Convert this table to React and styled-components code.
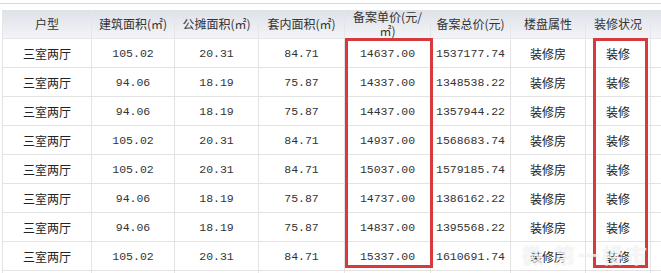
import React from 'react';
import styled, { createGlobalStyle } from 'styled-components';

const GlobalStyle = createGlobalStyle`
  html, body {
    margin: 0;
    padding: 0;
    background: #ffffff;
  }
  body {
    width: 661px;
    height: 273px;
    overflow: hidden;
  }
`

const Page = styled.div`
  position: relative;
  width: 661px;
  height: 273px;
  overflow: hidden;
  background: #ffffff;
  padding-top: 3px;
  box-sizing: border-box;
`

const TopRule = styled.div`
  height: 6px;
  border-top: 1px solid #dadada;
`

const Table = styled.table`
  border-collapse: collapse;
  table-layout: fixed;
  width: 680px;
  margin-left: 2px;
  font-family: "Noto Sans CJK SC", "Liberation Sans", sans-serif;
  font-size: 12px;
  color: #2a2a2a;
`

const HeadCell = styled.th`
  height: 27px;
  padding: 0 2px;
  font-weight: normal;
  line-height: 14px;
  text-align: center;
  color: #333;
  background: linear-gradient(#dde1e8, #f3f4f6);
  border: 1px solid #e4e6ea;
  border-top: none;
  white-space: ${(p) => (p.$wrap ? 'normal' : 'nowrap')};
`

const Cell = styled.td`
  height: 28px;
  padding: 0;
  text-align: center;
  border: 1px solid #e3e3e3;
  font-family: ${(p) =>
    p.$num ? '"Liberation Mono", "DejaVu Sans Mono", monospace' : '"Noto Sans CJK SC", sans-serif'};
  font-size: ${(p) => (p.$num ? '11.5px' : '12px')};
  color: ${(p) => (p.$num ? '#333' : '#222')};
  white-space: nowrap;
`

const Mark = styled.div`
  position: absolute;
  top: 38px;
  height: 230px;
  box-sizing: border-box;
  border: 3px solid #d63a3c;
  left: ${(p) => p.$left}px;
  width: ${(p) => p.$width}px;
`

const Watermark = styled.div`
  position: absolute;
  left: 522px;
  top: 242px;
  display: flex;
  align-items: center;
  gap: 8px;
  font-family: "Noto Sans CJK SC", sans-serif;
  font-size: 21px;
  line-height: 24px;
  font-weight: bold;
  letter-spacing: 3px;
  color: rgba(255, 255, 255, 0.72);
  text-shadow: 0 0 1px rgba(160, 160, 160, 0.35);
  pointer-events: none;
`

const columns = [89, 83, 84, 86, 86, 80, 75, 65, 40];

const headers = [
  '户型',
  '建筑面积(㎡)',
  '公摊面积(㎡)',
  '套内面积(㎡)',
  '备案单价(元/㎡)',
  '备案总价(元)',
  '楼盘属性',
  '装修状况',
  '',
];

const rows = [
  ['105.02', '20.31', '84.71', '14637.00', '1537177.74'],
  ['94.06', '18.19', '75.87', '14337.00', '1348538.22'],
  ['94.06', '18.19', '75.87', '14437.00', '1357944.22'],
  ['105.02', '20.31', '84.71', '14937.00', '1568683.74'],
  ['105.02', '20.31', '84.71', '15037.00', '1579185.74'],
  ['94.06', '18.19', '75.87', '14737.00', '1386162.22'],
  ['94.06', '18.19', '75.87', '14837.00', '1395568.22'],
  ['105.02', '20.31', '84.71', '15337.00', '1610691.74'],
];

const App = () => {
  return (
    <Page>
      <GlobalStyle />
      <TopRule />
      <Table>
        <colgroup>
          {columns.map((w, i) => (
            <col key={i} style={{ width: w }} />
          ))}
        </colgroup>
        <thead>
          <tr>
            {headers.map((h, i) => (
              <HeadCell key={i} $wrap={i === 4}>{h}</HeadCell>
            ))}
          </tr>
        </thead>
        <tbody>
          {rows.map((r, i) => (
            <tr key={i}>
              <Cell>三室两厅</Cell>
              {r.map((v, j) => (
                <Cell $num key={j}>{v}</Cell>
              ))}
              <Cell>装修房</Cell>
              <Cell>装修</Cell>
              <Cell />
            </tr>
          ))}
          <tr>
            {columns.map((w, i) => (
              <Cell key={i} />
            ))}
          </tr>
        </tbody>
      </Table>
      <Mark $left={345} $width={88} />
      <Mark $left={593} $width={55} />
      <Watermark>
        <span>微</span>
        <span>第一楼市</span>
      </Watermark>
    </Page>
  );
};

export default App;
